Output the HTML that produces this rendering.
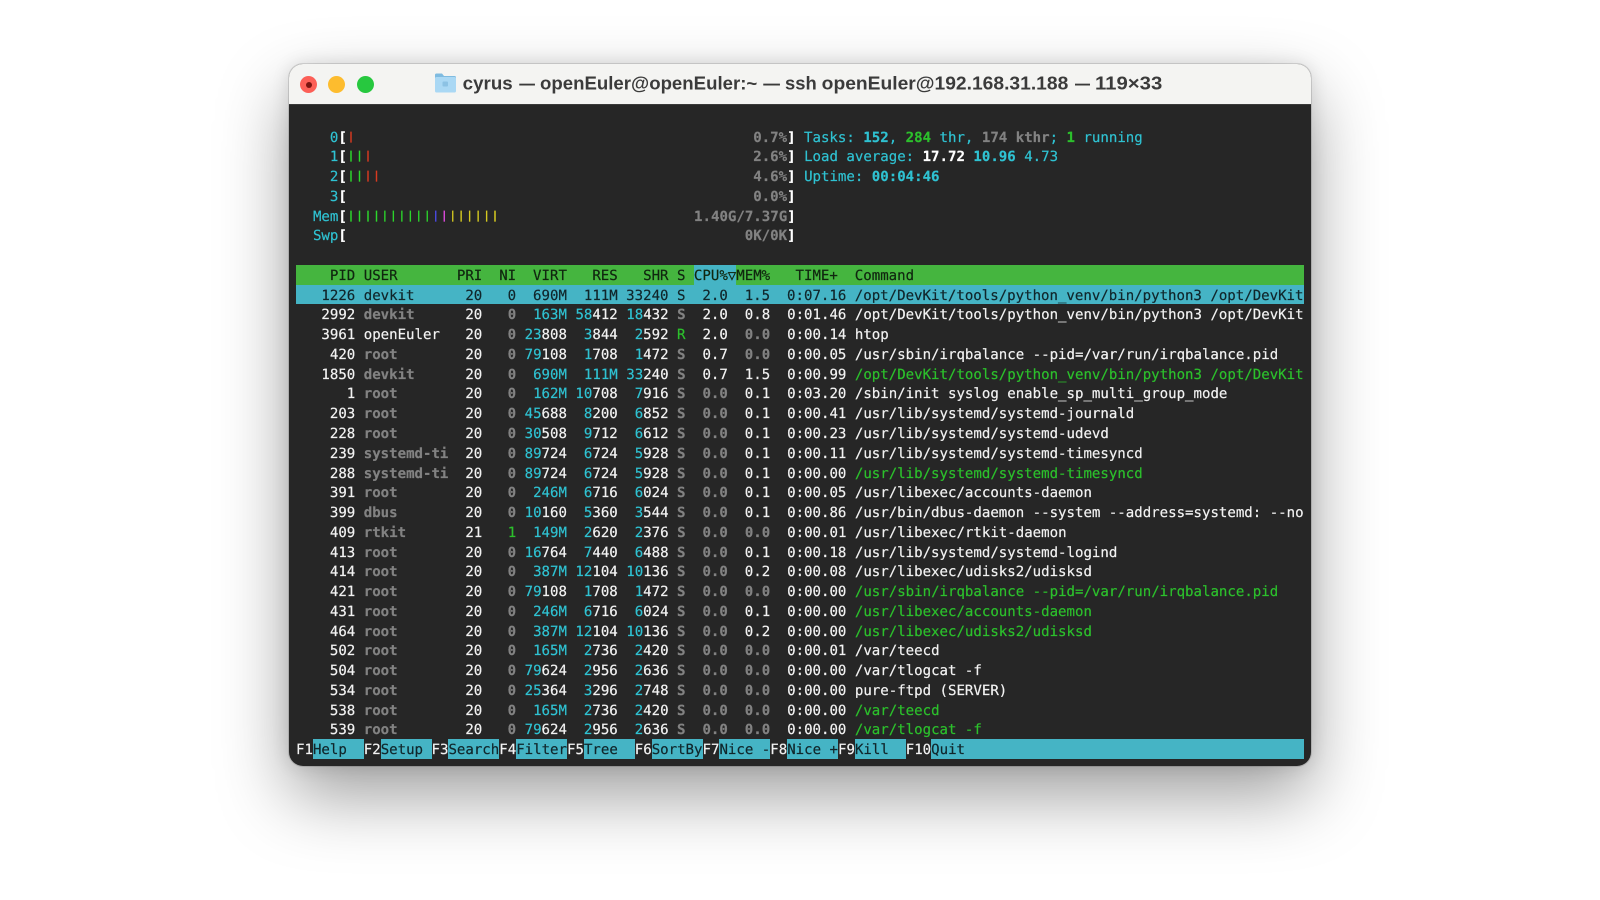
<!DOCTYPE html>
<html><head><meta charset="utf-8"><title>htop</title>
<style>
html,body{margin:0;padding:0;width:1600px;height:900px;background:#fff;overflow:hidden}
#win{position:absolute;left:289px;top:64px;width:1022px;height:702px;border-radius:14px;background:#262626;box-shadow:0 30px 70px rgba(0,0,0,.38),0 0 18px rgba(0,0,0,.12),0 0 0 1px rgba(0,0,0,.12)}
#bar{position:absolute;left:0;top:0;width:1022px;height:40px;background:#f4f4f2;border-radius:14px 14px 0 0;border-bottom:1px solid #3a3a3a;box-sizing:content-box}
.dot{position:absolute;top:12px;width:17px;height:17px;border-radius:50%}
svg text{font-family:"Liberation Sans",sans-serif;font-weight:700;font-size:18.5px;fill:#3b3b3b}
#term{position:absolute;left:296px;top:126.5px;width:1008px;font-family:"DejaVu Sans Mono","Liberation Mono",monospace;font-size:14.07px;color:#f2f2f2;text-rendering:geometricPrecision;-webkit-font-smoothing:antialiased;-webkit-text-stroke:.2px;filter:blur(.25px)}
.r{height:19.78px;line-height:22.6px;white-space:pre;overflow:hidden}
.r b{color:#828282;font-weight:700}
.r i{color:#2fc2d2;font-style:normal}
.r em{color:#2fc2d2;font-style:normal;font-weight:700}
.r u{color:#2cc02c;text-decoration:none}
.r strong{color:#2cc02c;font-weight:700}
.r mark{background:none;color:#fff;font-weight:700}
.R,.G,.B,.M,.Y{font-size:10.8px;font-weight:700;letter-spacing:1.97px;position:relative;left:.98px;top:-2px;-webkit-text-stroke:.15px}
.R{color:#d83a20}.G{color:#2cd82c}.B{color:#4c4cf0}.M{color:#e84ce8}.Y{color:#d8cc20}
.hd{background:#45b53f;color:#10260f}
.hd span{display:inline-block;height:19.78px;background:#45b4c5;vertical-align:top}
.sel{background:#45b4c5;color:#10262b}
.ft{background:#45b4c5;color:#10262b}
.ft span{display:inline-block;height:19.78px;background:#262626;color:#f2f2f2;vertical-align:top}
</style></head><body>
<div id="win">
<div id="bar">
<div class="dot" style="left:11px;background:#fc5f57"></div>
<div style="position:absolute;left:16.5px;top:17.5px;width:6px;height:6px;border-radius:50%;background:#7a1410"></div>
<div class="dot" style="left:39px;background:#fdbc2e"></div>
<div class="dot" style="left:67.5px;background:#27c83f"></div>
<svg style="position:absolute;left:0;top:0" width="1022" height="40">
<g transform="translate(0,.5)">
<path d="M146 10.5q0-1.500 1.500-1.500h5.500l2 2.500h10.500q1.500 0 1.500 1.500v1h-21z" fill="#7fbbe0"/>
<rect x="146" y="12.500" width="21" height="15.500" rx="1.500" fill="#aad8f4"/>
<rect x="153.500" y="17" width="5.500" height="5" rx="1" fill="#8cc2e4"/>
</g>
<text x="173.700" y="25.500" textLength="50" lengthAdjust="spacingAndGlyphs">cyrus</text>
<text x="230.300" y="25.500" textLength="15.700" lengthAdjust="spacingAndGlyphs">—</text>
<text x="251" y="25.500" textLength="217.300" lengthAdjust="spacingAndGlyphs">openEuler@openEuler:~</text>
<text x="474.300" y="25.500" textLength="16.700" lengthAdjust="spacingAndGlyphs">—</text>
<text x="496" y="25.500" textLength="31.700" lengthAdjust="spacingAndGlyphs">ssh</text>
<text x="532.700" y="25.500" textLength="246.600" lengthAdjust="spacingAndGlyphs">openEuler@192.168.31.188</text>
<text x="786" y="25.500" textLength="15" lengthAdjust="spacingAndGlyphs">—</text>
<text x="806" y="25.500" textLength="67.300" lengthAdjust="spacingAndGlyphs">119×33</text>
</svg>
</div>
</div>
<div id="term">
<div class="r">    <i>0</i><mark>[</mark><span class="R">|</span>                                               <b>0.7%</b><mark>]</mark> <i>Tasks: </i><em>152</em><i>, </i><strong>284</strong><i> thr, </i><b>174 kthr</b><i>; </i><strong>1</strong><i> running</i></div>
<div class="r">    <i>1</i><mark>[</mark><span class="G">||</span><span class="R">|</span>                                             <b>2.6%</b><mark>]</mark> <i>Load average: </i><mark>17.72</mark> <em>10.96</em> <i>4.73</i></div>
<div class="r">    <i>2</i><mark>[</mark><span class="G">||</span><span class="R">||</span>                                            <b>4.6%</b><mark>]</mark> <i>Uptime: </i><em>00:04:46</em></div>
<div class="r">    <i>3</i><mark>[</mark>                                                <b>0.0%</b><mark>]</mark></div>
<div class="r">  <i>Mem</i><mark>[</mark><span class="G">||||||||||</span><span class="B">|</span><span class="M">|</span><span class="Y">||||||</span>                       <b>1.40G/7.37G</b><mark>]</mark></div>
<div class="r">  <i>Swp</i><mark>[</mark>                                               <b>0K/0K</b><mark>]</mark></div>
<div class="r"> </div>
<div class="r hd">    PID USER       PRI  NI  VIRT   RES   SHR S <span>CPU%▽</span>MEM%   TIME+  Command</div>
<div class="r sel">   1226 devkit      20   0  690M  111M 33240 S  2.0  1.5  0:07.16 /opt/DevKit/tools/python_venv/bin/python3 /opt/DevKit</div>
<div class="r">   2992 <b>devkit</b>      20   <b>0</b>  <i>163M</i> <i>58</i>412 <i>18</i>432 <b>S</b>  2.0  0.8  0:01.46 /opt/DevKit/tools/python_venv/bin/python3 /opt/DevKit</div>
<div class="r">   3961 openEuler   20   <b>0</b> <i>23</i>808  <i>3</i>844  <i>2</i>592 <u>R</u>  2.0  <b>0.0</b>  0:00.14 htop</div>
<div class="r">    420 <b>root</b>        20   <b>0</b> <i>79</i>108  <i>1</i>708  <i>1</i>472 <b>S</b>  0.7  <b>0.0</b>  0:00.05 /usr/sbin/irqbalance --pid=/var/run/irqbalance.pid</div>
<div class="r">   1850 <b>devkit</b>      20   <b>0</b>  <i>690M</i>  <i>111M</i> <i>33</i>240 <b>S</b>  0.7  1.5  0:00.99 <u>/opt/DevKit/tools/python_venv/bin/python3 /opt/DevKit</u></div>
<div class="r">      1 <b>root</b>        20   <b>0</b>  <i>162M</i> <i>10</i>708  <i>7</i>916 <b>S</b>  <b>0.0</b>  0.1  0:03.20 /sbin/init syslog enable_sp_multi_group_mode</div>
<div class="r">    203 <b>root</b>        20   <b>0</b> <i>45</i>688  <i>8</i>200  <i>6</i>852 <b>S</b>  <b>0.0</b>  0.1  0:00.41 /usr/lib/systemd/systemd-journald</div>
<div class="r">    228 <b>root</b>        20   <b>0</b> <i>30</i>508  <i>9</i>712  <i>6</i>612 <b>S</b>  <b>0.0</b>  0.1  0:00.23 /usr/lib/systemd/systemd-udevd</div>
<div class="r">    239 <b>systemd-ti</b>  20   <b>0</b> <i>89</i>724  <i>6</i>724  <i>5</i>928 <b>S</b>  <b>0.0</b>  0.1  0:00.11 /usr/lib/systemd/systemd-timesyncd</div>
<div class="r">    288 <b>systemd-ti</b>  20   <b>0</b> <i>89</i>724  <i>6</i>724  <i>5</i>928 <b>S</b>  <b>0.0</b>  0.1  0:00.00 <u>/usr/lib/systemd/systemd-timesyncd</u></div>
<div class="r">    391 <b>root</b>        20   <b>0</b>  <i>246M</i>  <i>6</i>716  <i>6</i>024 <b>S</b>  <b>0.0</b>  0.1  0:00.05 /usr/libexec/accounts-daemon</div>
<div class="r">    399 <b>dbus</b>        20   <b>0</b> <i>10</i>160  <i>5</i>360  <i>3</i>544 <b>S</b>  <b>0.0</b>  0.1  0:00.86 /usr/bin/dbus-daemon --system --address=systemd: --no</div>
<div class="r">    409 <b>rtkit</b>       21   <u>1</u>  <i>149M</i>  <i>2</i>620  <i>2</i>376 <b>S</b>  <b>0.0</b>  <b>0.0</b>  0:00.01 /usr/libexec/rtkit-daemon</div>
<div class="r">    413 <b>root</b>        20   <b>0</b> <i>16</i>764  <i>7</i>440  <i>6</i>488 <b>S</b>  <b>0.0</b>  0.1  0:00.18 /usr/lib/systemd/systemd-logind</div>
<div class="r">    414 <b>root</b>        20   <b>0</b>  <i>387M</i> <i>12</i>104 <i>10</i>136 <b>S</b>  <b>0.0</b>  0.2  0:00.08 /usr/libexec/udisks2/udisksd</div>
<div class="r">    421 <b>root</b>        20   <b>0</b> <i>79</i>108  <i>1</i>708  <i>1</i>472 <b>S</b>  <b>0.0</b>  <b>0.0</b>  0:00.00 <u>/usr/sbin/irqbalance --pid=/var/run/irqbalance.pid</u></div>
<div class="r">    431 <b>root</b>        20   <b>0</b>  <i>246M</i>  <i>6</i>716  <i>6</i>024 <b>S</b>  <b>0.0</b>  0.1  0:00.00 <u>/usr/libexec/accounts-daemon</u></div>
<div class="r">    464 <b>root</b>        20   <b>0</b>  <i>387M</i> <i>12</i>104 <i>10</i>136 <b>S</b>  <b>0.0</b>  0.2  0:00.00 <u>/usr/libexec/udisks2/udisksd</u></div>
<div class="r">    502 <b>root</b>        20   <b>0</b>  <i>165M</i>  <i>2</i>736  <i>2</i>420 <b>S</b>  <b>0.0</b>  <b>0.0</b>  0:00.01 /var/teecd</div>
<div class="r">    504 <b>root</b>        20   <b>0</b> <i>79</i>624  <i>2</i>956  <i>2</i>636 <b>S</b>  <b>0.0</b>  <b>0.0</b>  0:00.00 /var/tlogcat -f</div>
<div class="r">    534 <b>root</b>        20   <b>0</b> <i>25</i>364  <i>3</i>296  <i>2</i>748 <b>S</b>  <b>0.0</b>  <b>0.0</b>  0:00.00 pure-ftpd (SERVER)</div>
<div class="r">    538 <b>root</b>        20   <b>0</b>  <i>165M</i>  <i>2</i>736  <i>2</i>420 <b>S</b>  <b>0.0</b>  <b>0.0</b>  0:00.00 <u>/var/teecd</u></div>
<div class="r">    539 <b>root</b>        20   <b>0</b> <i>79</i>624  <i>2</i>956  <i>2</i>636 <b>S</b>  <b>0.0</b>  <b>0.0</b>  0:00.00 <u>/var/tlogcat -f</u></div>
<div class="r ft"><span>F1</span>Help  <span>F2</span>Setup <span>F3</span>Search<span>F4</span>Filter<span>F5</span>Tree  <span>F6</span>SortBy<span>F7</span>Nice -<span>F8</span>Nice +<span>F9</span>Kill  <span>F10</span>Quit</div>
</div>
</body></html>
